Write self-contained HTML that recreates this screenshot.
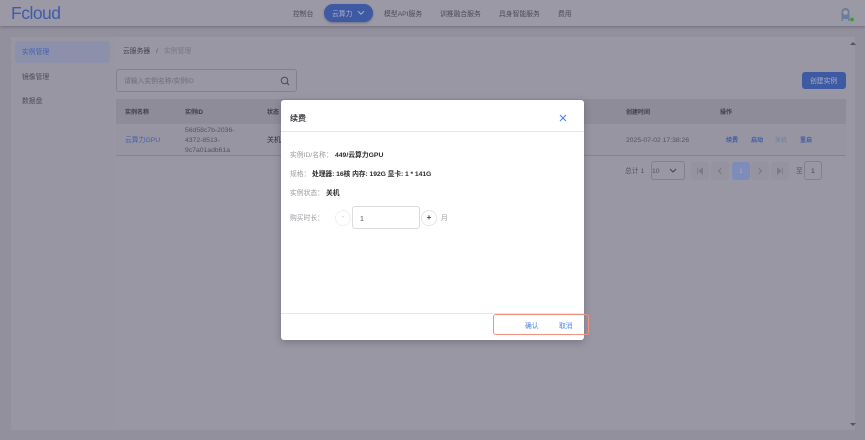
<!DOCTYPE html>
<html lang="zh">
<head>
<meta charset="utf-8">
<style>
*{box-sizing:border-box}
html,body{margin:0;padding:0}
body{width:865px;height:440px;overflow:hidden;position:relative;background:#92909d;font-family:"Liberation Sans","Noto Sans CJK SC",sans-serif;color:#3a3844}
.a{position:absolute;white-space:nowrap;line-height:1}
#page{position:absolute;inset:0;filter:blur(.35px)}
.hdr{left:0;top:0;width:865px;height:26px;background:#9b99a5;box-shadow:0 1px 3px rgba(50,48,60,.35)}
.nav{font-size:6.8px;color:#4d4b58;top:12px}
.cell{font-size:6px;font-weight:700;color:#3f3d49;top:110px}
.dim{font-size:6.8px;color:#55535f}
.op{font-size:6px;font-weight:700;color:#3f5aa5;top:138px}
.pg{width:18px;height:18px;top:162px;background:#95939f;border-radius:3px}
.pg svg{position:absolute;left:5px;top:5px}
.lb{font-size:6.8px;color:#9a9aa0;left:290px}
.val{font-size:6.8px;font-weight:700;color:#2c2c30}
</style>
</head>
<body>
<div id="page">
  <div class="a" style="left:11px;top:37px;width:103px;height:393px;background:#9896a3"></div>
  <div class="a" style="left:114px;top:37px;width:741px;height:393px;background:#9997a3"></div>

  <div class="a hdr"></div>
  <div class="a" style="left:11px;top:3px;font-size:17.5px;color:#3e5cac;letter-spacing:-.5px;line-height:20px">Fcloud</div>
  <div class="a nav" style="left:293px">控制台</div>
  <div class="a" style="left:324px;top:4px;width:49px;height:18px;border-radius:9px;background:#3d5aa3;box-shadow:0 1px 2px rgba(40,50,90,.4)"></div>
  <div class="a nav" style="left:332px;color:#a9aec8">云算力</div>
  <svg class="a" style="left:357px;top:10px" width="8" height="6" viewBox="0 0 8 6"><path d="M1 1.2 4 4.2 7 1.2" fill="none" stroke="#b0b5cc" stroke-width="1"/></svg>
  <div class="a nav" style="left:384px">模型API服务</div>
  <div class="a nav" style="left:440px">训推融合服务</div>
  <div class="a nav" style="left:499px">具身智能服务</div>
  <div class="a nav" style="left:558px">费用</div>
  <svg class="a" style="left:840px;top:6px" width="15" height="16" viewBox="0 0 15 16">
    <path d="M1.5 15V6a4 4 0 0 1 8 0v9z" fill="#6d7c99"/>
    <circle cx="5.5" cy="6.5" r="2.3" fill="#a5a3ad"/>
    <path d="M3 13h5v2H3z" fill="#8a9ab8"/>
    <circle cx="12" cy="13.5" r="1.9" fill="#3f9a2f"/>
  </svg>

  <div class="a" style="left:15px;top:41px;width:95px;height:22px;border-radius:3px;background:#8d90ab"></div>
  <div class="a" style="left:22px;top:50px;font-size:6.8px;color:#4561ad">实例管理</div>
  <div class="a" style="left:22px;top:75px;font-size:6.8px;color:#4d4b58">镜像管理</div>
  <div class="a" style="left:22px;top:99px;font-size:6.8px;color:#4d4b58">数据盘</div>

  <div class="a" style="left:123px;top:49px;font-size:6.8px;color:#45434f">云服务器</div>
  <div class="a" style="left:156px;top:49px;font-size:6.8px;color:#55535f">/</div>
  <div class="a" style="left:164px;top:49px;font-size:6.8px;color:#787683">实例管理</div>

  <div class="a" style="left:116px;top:69px;width:181px;height:23px;border:1px solid #82808f;border-radius:3px"></div>
  <div class="a" style="left:124px;top:79px;font-size:6.8px;color:#6f6d7a">请输入实例名称/实例ID</div>
  <svg class="a" style="left:280px;top:76px" width="10" height="10" viewBox="0 0 10 10"><circle cx="4.5" cy="4.5" r="3.3" fill="none" stroke="#44424e" stroke-width=".9"/><path d="M7 7 9 9" stroke="#44424e" stroke-width=".9"/></svg>

  <div class="a" style="left:802px;top:72px;width:44px;height:17px;border-radius:3px;background:#3d5aa3"></div>
  <div class="a" style="left:810px;top:79px;font-size:6.8px;color:#a9aec8">创建实例</div>

  <div class="a" style="left:116px;top:99px;width:730px;height:25px;background:#8e8c99"></div>
  <div class="a" style="left:116px;top:124px;width:730px;height:32px;background:#9795a1;border-bottom:1px solid #85838f"></div>
  <div class="a cell" style="left:125px">实例名称</div>
  <div class="a cell" style="left:185px">实例ID</div>
  <div class="a cell" style="left:267px">状态</div>
  <div class="a cell" style="left:626px">创建时间</div>
  <div class="a cell" style="left:720px">操作</div>
  <div class="a" style="left:125px;top:138px;font-size:6.8px;color:#4561ad">云算力GPU</div>
  <div class="a dim" style="left:185px;top:126px;line-height:10.2px;white-space:pre">56d58c7b-2036-
4372-8513-
9c7a01adb61a</div>
  <div class="a" style="left:267px;top:137px;font-size:7px;color:#33313c">关机</div>
  <div class="a dim" style="left:626px;top:138px">2025-07-02 17:38:26</div>
  <div class="a op" style="left:726px">续费</div>
  <div class="a op" style="left:751px">启动</div>
  <div class="a op" style="left:775px;color:#7c83a8">关机</div>
  <div class="a op" style="left:800px">重启</div>

  <div class="a dim" style="left:625px;top:169px">总计 1</div>
  <div class="a" style="left:651px;top:161px;width:34px;height:19px;border:1px solid #82808f;border-radius:3px"></div>
  <div class="a dim" style="left:652px;top:169px">10</div>
  <svg class="a" style="left:669px;top:168px" width="8" height="6" viewBox="0 0 8 6"><path d="M1 1 4 4 7 1" fill="none" stroke="#44424e" stroke-width="1"/></svg>
  <div class="a pg" style="left:691px"><svg width="8" height="8" viewBox="0 0 8 8"><path d="M1.5 1v6M6.5 1 3 4l3.5 3z" fill="#7a7885" stroke="#7a7885" stroke-width=".8"/></svg></div>
  <div class="a pg" style="left:711px"><svg width="8" height="8" viewBox="0 0 8 8"><path d="M5.5 1 2.5 4l3 3" fill="none" stroke="#7a7885" stroke-width="1"/></svg></div>
  <div class="a pg" style="left:732px;background:#7d8cb8"></div>
  <div class="a" style="left:739px;top:169px;font-size:6.8px;color:#a9aec8">1</div>
  <div class="a pg" style="left:751px"><svg width="8" height="8" viewBox="0 0 8 8"><path d="M2.5 1l3 3-3 3" fill="none" stroke="#7a7885" stroke-width="1"/></svg></div>
  <div class="a pg" style="left:771px"><svg width="8" height="8" viewBox="0 0 8 8"><path d="M6.5 1v6M1.5 1 5 4 1.5 7z" fill="#7a7885" stroke="#7a7885" stroke-width=".8"/></svg></div>
  <div class="a dim" style="left:796px;top:169px">至</div>
  <div class="a" style="left:804px;top:161px;width:18px;height:19px;border:1px solid #82808f;border-radius:3px"></div>
  <div class="a" style="left:811px;top:169px;font-size:6.8px;color:#45434f">1</div>

  <div class="a" style="left:850px;top:42px;width:0;height:0;border:3px solid transparent;border-bottom:3px solid #55535f;border-top:0"></div>
  <div class="a" style="left:850px;top:423px;width:0;height:0;border:3px solid transparent;border-top:3px solid #55535f;border-bottom:0"></div>

  <!-- modal -->
  <div class="a" style="left:281px;top:100px;width:303px;height:240px;background:#fff;border-radius:3px;box-shadow:0 2px 8px rgba(40,38,50,.3)"></div>
  <div class="a" style="left:281px;top:131px;width:303px;height:1px;background:#e6e6ea"></div>
  <div class="a" style="left:290px;top:115px;font-size:8px;font-weight:700;color:#3a3a40">续费</div>
  <svg class="a" style="left:559px;top:114px" width="8" height="8" viewBox="0 0 8 8"><path d="M1 1 7 7M7 1 1 7" stroke="#4d7fee" stroke-width="1.1"/></svg>

  <div class="a lb" style="top:153px">实例ID/名称：</div>
  <div class="a val" style="left:335px;top:153px">449/云算力GPU</div>
  <div class="a lb" style="top:172px">规格：</div>
  <div class="a val" style="left:312px;top:172px;letter-spacing:-.08px">处理器: 16核 内存: 192G 显卡: 1 * 141G</div>
  <div class="a lb" style="top:191px">实例状态：</div>
  <div class="a val" style="left:326px;top:191px">关机</div>
  <div class="a lb" style="top:216px">购买时长：</div>
  <div class="a" style="left:335px;top:210px;width:16px;height:16px;border:1px solid #f1f1f3;border-radius:50%;font-size:7px;color:#b5b5ba;text-align:center;line-height:14px">-</div>
  <div class="a" style="left:352px;top:206px;width:68px;height:23px;border:1px solid #dcdce0;border-radius:3px"></div>
  <div class="a" style="left:360px;top:216px;font-size:7px;color:#555">1</div>
  <div class="a" style="left:421px;top:210px;width:16px;height:16px;border:1px solid #e6e6ea;border-radius:50%;font-size:8px;font-weight:700;color:#444;text-align:center;line-height:14px">+</div>
  <div class="a lb" style="left:441px;top:216px">月</div>

  <div class="a" style="left:281px;top:313px;width:303px;height:1px;background:#e6e6ea"></div>
  <div class="a" style="left:493px;top:314px;width:96px;height:21px;border:1px solid #f0907f;border-radius:3px"></div>
  <div class="a" style="left:525px;top:324px;font-size:6.8px;color:#4d7fee">确认</div>
  <div class="a" style="left:559px;top:324px;font-size:6.8px;color:#4d7fee">取消</div>
</div>
</body>
</html>
